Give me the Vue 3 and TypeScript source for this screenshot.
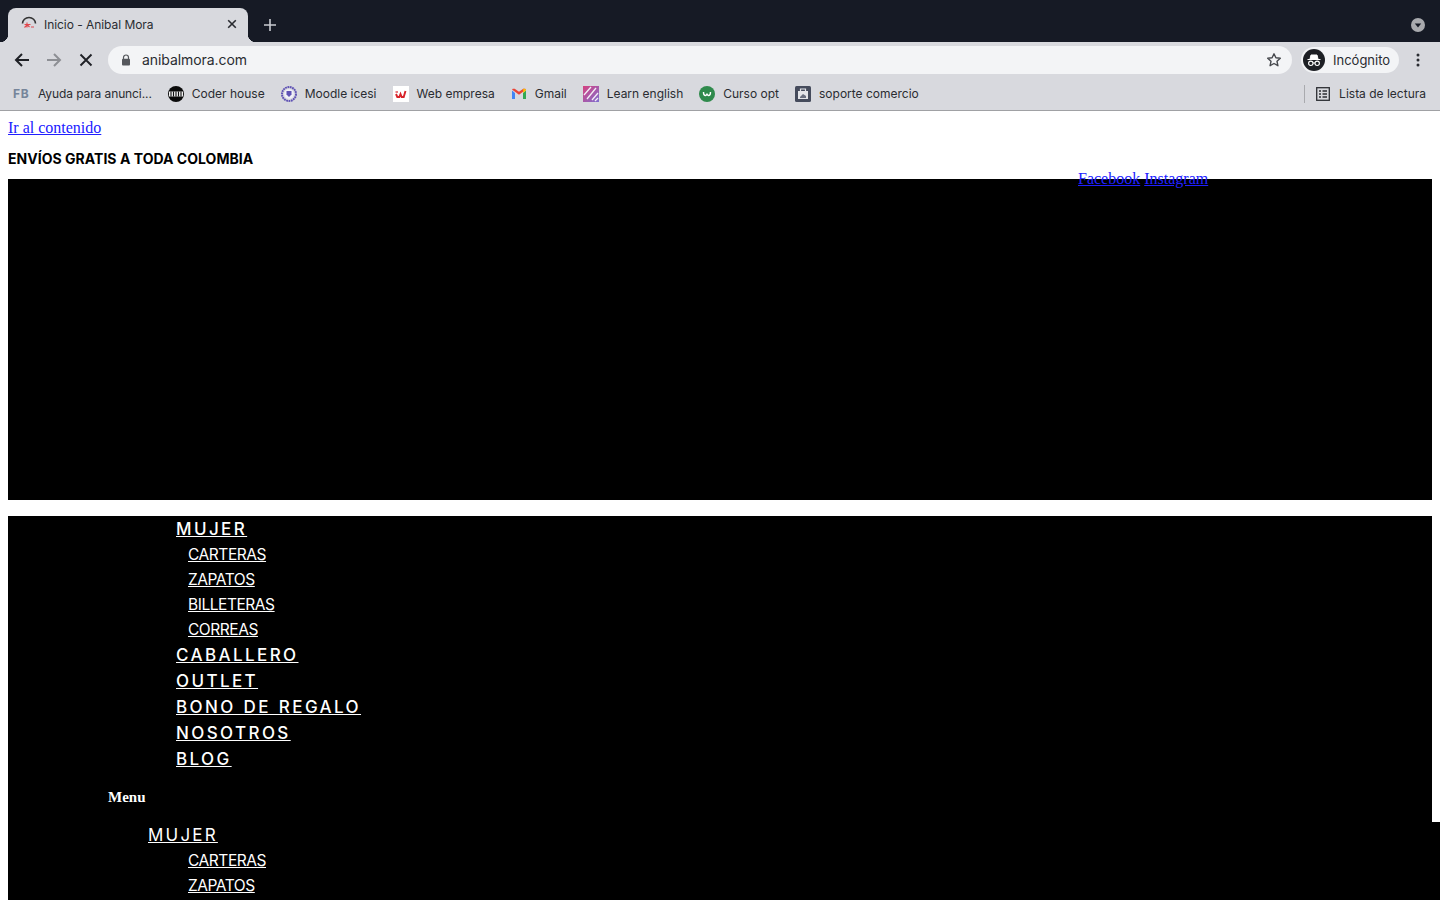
<script setup lang="ts">
interface Bookmark {
  label: string
  icon: string
}

interface NavItem {
  label: string
  children?: string[]
}

const bookmarks: Bookmark[] = [
  { label: 'Ayuda para anunci...', icon: 'fb' },
  { label: 'Coder house', icon: 'coder' },
  { label: 'Moodle icesi', icon: 'moodle' },
  { label: 'Web empresa', icon: 'web' },
  { label: 'Gmail', icon: 'gmail' },
  { label: 'Learn english', icon: 'learn' },
  { label: 'Curso opt', icon: 'curso' },
  { label: 'soporte comercio', icon: 'soporte' },
]

const subItems = ['CARTERAS', 'ZAPATOS', 'BILLETERAS', 'CORREAS']

const mainNav: NavItem[] = [
  { label: 'MUJER', children: subItems },
  { label: 'CABALLERO' },
  { label: 'OUTLET' },
  { label: 'BONO DE REGALO' },
  { label: 'NOSOTROS' },
  { label: 'BLOG' },
]

// only the first two fit above the fold
const mobileSubs = subItems.slice(0, 2)
</script>

<template>
  <div class="screen">
    <header class="browser">
      <div class="tabstrip">
        <div class="tab">
          <svg class="tab-icon" viewBox="0 0 16 16" width="16" height="16">
            <path d="M1.5 7.5A6.5 6 0 0 1 14.5 7.5" fill="none" stroke="#333" stroke-width="1.6" />
            <path d="M3.5 8.5h6M6 6.5v5M6 9l-2.500 2.500M6.500 9l2 2M10 11h3" fill="none" stroke="#e0474c" stroke-width="1.1" />
          </svg>
          <span class="tab-title">Inicio - Anibal Mora</span>
          <svg class="tab-close" viewBox="0 0 10 10" width="10" height="10">
            <path d="M1.2 1.2l7.6 7.6M8.8 1.2l-7.6 7.6" stroke="#2a2c31" stroke-width="1.6" />
          </svg>
        </div>
        <svg class="new-tab" viewBox="0 0 12 12" width="12" height="12">
          <path d="M6 0v12M0 6h12" stroke="#c9cbd1" stroke-width="1.6" />
        </svg>
        <svg class="tab-search" viewBox="0 0 14 14" width="14" height="14">
          <circle cx="7" cy="7" r="7" fill="#a9aaae" />
          <path d="M3.8 5.5h6.4L7 9.6z" fill="#161a25" />
        </svg>
      </div>

      <div class="toolbar">
        <svg class="nav-icon" viewBox="0 0 16 16" width="16" height="16">
          <path d="M15 8H2M8 2L2 8l6 6" fill="none" stroke="#1f2126" stroke-width="2" />
        </svg>
        <svg class="nav-icon" viewBox="0 0 16 16" width="16" height="16">
          <path d="M1 8h13M8 2l6 6-6 6" fill="none" stroke="#8d8f94" stroke-width="2" />
        </svg>
        <svg class="nav-icon" viewBox="0 0 16 16" width="16" height="16">
          <path d="M2.500 2.500l11 11M13.500 2.500l-11 11" fill="none" stroke="#1f2126" stroke-width="1.900" />
        </svg>
        <div class="omnibox">
          <svg class="lock" viewBox="0 0 10 12" width="10" height="12">
            <path d="M2.500 5V3.500a2.500 2.500 0 0 1 5 0V5" fill="none" stroke="#55575c" stroke-width="1.2" />
            <rect x="1" y="4.800" width="8" height="6.700" rx="1" fill="#55575c" />
          </svg>
          <span class="url">anibalmora.com</span>
          <svg class="star" viewBox="0 0 16 16" width="16" height="16">
            <path d="M8 1.800l1.900 4 4.400.5-3.300 3 .9 4.400L8 11.500l-3.900 2.200.9-4.400-3.300-3 4.400-.5z" fill="none" stroke="#46484d" stroke-width="1.400" stroke-linejoin="round" />
          </svg>
        </div>
        <div class="incognito">
          <svg viewBox="0 0 22 22" width="22" height="22">
            <circle cx="11" cy="11" r="11" fill="#1d1f24" />
            <path d="M4.500 10.500h13M7 10l1-4h6l1 4z" fill="#fff" stroke="#fff" stroke-width="1" />
            <circle cx="7.800" cy="14.300" r="2.200" fill="none" stroke="#fff" stroke-width="1.100" />
            <circle cx="14.200" cy="14.300" r="2.200" fill="none" stroke="#fff" stroke-width="1.100" />
            <path d="M10 14h2" stroke="#fff" stroke-width="1" />
          </svg>
          <span>Incógnito</span>
        </div>
        <svg class="dots" viewBox="0 0 4 14" width="4" height="14">
          <circle cx="2" cy="2" r="1.500" fill="#2a2c31" />
          <circle cx="2" cy="7" r="1.500" fill="#2a2c31" />
          <circle cx="2" cy="12" r="1.500" fill="#2a2c31" />
        </svg>
      </div>

      <div class="bookmarks">
        <div v-for="b in bookmarks" :key="b.label" class="bookmark">
          <span v-if="b.icon === 'fb'" class="fb-mark">FB</span>
          <svg v-else-if="b.icon === 'coder'" viewBox="0 0 16 16" width="16" height="16">
            <circle cx="8" cy="8" r="8" fill="#0b0b0b" />
            <rect x="1" y="5.500" width="14" height="5" fill="#f0f0f0" />
            <path d="M3 5.500v5M5.500 5.500v5M8 5.500v5M10.500 5.500v5M13 5.500v5" stroke="#111" stroke-width="1.100" />
          </svg>
          <svg v-else-if="b.icon === 'moodle'" viewBox="0 0 16 16" width="16" height="16">
            <circle cx="8" cy="8" r="7" fill="none" stroke="#5f52b4" stroke-width="2" stroke-dasharray="1.800 .6" />
            <circle cx="8" cy="8" r="4.800" fill="#f1f0f8" />
            <path d="M5.500 5h5v3.500L8 11 5.500 8.500z" fill="#5f52b4" />
          </svg>
          <svg v-else-if="b.icon === 'web'" viewBox="0 0 16 16" width="16" height="16">
            <rect width="16" height="16" fill="#fff" />
            <path d="M3 8l1.300 3h2l1.200-3 1.200 3h2l1.800-6" fill="none" stroke="#d8232a" stroke-width="1.900" />
            <path d="M2.500 6h2.500" stroke="#d8232a" stroke-width="1.200" />
          </svg>
          <svg v-else-if="b.icon === 'gmail'" viewBox="0 0 16 16" width="16" height="16">
            <path d="M1 4.500v8.500h3V7z" fill="#4285f4" />
            <path d="M12 7v6h3V4.500z" fill="#34a853" />
            <path d="M1 3.500L8 8.800l7-5.300-.8-.8H12.300L8 5.800 3.700 2.700H1.800z" fill="#ea4335" />
            <path d="M13.500 2.700h-1.300L12 7l3-2.500V3.500z" fill="#fbbc04" />
          </svg>
          <svg v-else-if="b.icon === 'learn'" viewBox="0 0 16 16" width="16" height="16">
            <defs>
              <linearGradient id="learnFill" x1="0" y1="0" x2="1" y2="1">
                <stop offset="0" stop-color="#d6417f" />
                <stop offset="1" stop-color="#7f6fd0" />
              </linearGradient>
            </defs>
            <rect width="16" height="16" fill="url(#learnFill)" />
            <path d="M1 9l7-8M4 13l9-11M9 14l6-7M12 15l3-3" stroke="#f3eef6" stroke-width="1.300" />
          </svg>
          <svg v-else-if="b.icon === 'curso'" viewBox="0 0 16 16" width="16" height="16">
            <circle cx="8" cy="8" r="8" fill="#2f8a4c" />
            <path d="M4.500 6c0 4.500 3.200 4.300 3.500 1.500.3 2.800 3.500 3 3.500-1.500" fill="none" stroke="#fff" stroke-width="1.400" />
          </svg>
          <svg v-else viewBox="0 0 16 16" width="16" height="16">
            <rect width="16" height="16" rx="1.500" fill="#454b5c" />
            <path d="M3 5h10v8H3z" fill="#e4e5e9" />
            <path d="M5.500 5V3h5v2" fill="none" stroke="#e4e5e9" stroke-width="1.200" />
            <path d="M5 11l3-3 3 2v2H5z" fill="#6b7080" />
          </svg>
          <span class="bookmark-label">{{ b.label }}</span>
        </div>
        <div class="reading-list">
          <svg viewBox="0 0 14 14" width="14" height="14">
            <rect x=".7" y=".7" width="12.600" height="12.600" fill="none" stroke="#2d2f34" stroke-width="1.300" />
            <path d="M3 4h2M3 7h2M3 10h2M6.500 4H11M6.500 7H11M6.500 10H11" stroke="#2d2f34" stroke-width="1.300" />
          </svg>
          <span class="bookmark-label">Lista de lectura</span>
        </div>
      </div>
    </header>

    <main class="page">
      <a class="skip" href="#">Ir al contenido</a>
      <p class="promo">ENVÍOS GRATIS A TODA COLOMBIA</p>
      <div class="hero">
        <div class="social"><a href="#">Facebook</a> <a href="#">Instagram</a></div>
      </div>
      <nav class="menu-block">
        <ul class="main-nav">
          <li v-for="item in mainNav" :key="item.label">
            <a class="top-link" href="#">{{ item.label }}</a>
            <ul v-if="item.children" class="sub-nav">
              <li v-for="child in item.children" :key="child"><a href="#">{{ child }}</a></li>
            </ul>
          </li>
        </ul>
        <div class="menu-title">Menu</div>
      </nav>
      <nav class="mobile-nav">
        <a class="top-link thin" href="#">MUJER</a>
        <ul class="sub-nav mobile">
          <li v-for="child in mobileSubs" :key="child"><a href="#">{{ child }}</a></li>
        </ul>
      </nav>
    </main>
  </div>
</template>

<style scoped>
.screen {
  width: 1440px;
  height: 900px;
  overflow: hidden;
  background: #fff;
}

.browser {
  font-family: Inter, "Liberation Sans", sans-serif;
  color: #2a2c31;
}

.tabstrip {
  display: flex;
  align-items: flex-end;
  height: 42px;
  padding-left: 8px;
  background: #161a25;
}

.tab {
  position: relative;
  display: flex;
  align-items: center;
  width: 240px;
  height: 34px;
  box-sizing: border-box;
  padding: 0 11px 2px 13px;
  border-radius: 8px 8px 0 0;
  background: #d8d9de;
}

.tab::before,
.tab::after {
  content: "";
  position: absolute;
  bottom: 0;
  width: 8px;
  height: 8px;
}

.tab::before {
  left: -8px;
  background: radial-gradient(circle at 0 0, transparent 8px, #d8d9de 8.500px);
}

.tab::after {
  right: -8px;
  background: radial-gradient(circle at 100% 0, transparent 8px, #d8d9de 8.500px);
}

.tab-title {
  flex: 1;
  margin-left: 7px;
  font-size: 12px;
  letter-spacing: -.05px;
}

.new-tab {
  margin: 0 0 11px 16px;
}

.tab-search {
  margin: 0 15px 10px auto;
}

.toolbar {
  display: flex;
  align-items: center;
  height: 36px;
  padding-left: 14px;
  background: #d8d9de;
}

.nav-icon {
  margin-right: 16px;
}

.omnibox {
  display: flex;
  align-items: center;
  width: 1184px;
  height: 28px;
  box-sizing: border-box;
  margin-left: -2px;
  padding: 0 10px 0 13px;
  border-radius: 14px;
  background: #f3f4f6;
}

.url {
  flex: 1;
  margin: -2px 0 0 11px;
  font-size: 14px;
  letter-spacing: -.07px;
}

.incognito {
  display: flex;
  align-items: center;
  gap: 8px;
  width: 98px;
  height: 26px;
  box-sizing: border-box;
  margin-left: 9px;
  padding-left: 2px;
  border-radius: 13px;
  background: #f3f4f6;
  font-size: 13px;
}

.dots {
  margin-left: 17px;
}

.bookmarks {
  display: flex;
  align-items: center;
  gap: 16px;
  height: 33px;
  box-sizing: border-box;
  padding: 0 0 1px 13px;
  border-bottom: 1px solid #a0a1a4;
  background: #d8d9de;
}

.bookmark {
  display: flex;
  align-items: center;
  gap: 8px;
}

.bookmark-label {
  font-size: 12px;
  white-space: nowrap;
}

.bookmark:first-child .bookmark-label {
  letter-spacing: -.1px;
}

.fb-mark {
  width: 17px;
  color: #76859a;
  font-size: 12px;
  font-weight: 700;
  letter-spacing: .6px;
}

.reading-list {
  display: flex;
  align-items: center;
  gap: 9px;
  height: 18px;
  margin-left: auto;
  padding: 0 14px 0 11px;
  border-left: 1px solid #a9aaae;
}

.page {
  padding: 8px 0 0 8px;
  font-family: "Liberation Serif", serif;
  font-size: 16px;
}

.skip {
  display: block;
  color: #2020ff;
  line-height: 18px;
}

.promo {
  margin: 13px 0 0;
  color: #000;
  font-family: Inter, sans-serif;
  font-size: 14px;
  font-weight: 700;
  line-height: 17px;
  letter-spacing: .03px;
}

.hero {
  position: relative;
  width: 1424px;
  height: 321px;
  margin: 12px 0 16px;
  background: #000;
}

.social {
  position: absolute;
  top: -9px;
  left: 1070px;
  line-height: 18px;
  white-space: nowrap;
}

.social a {
  color: #2020ff;
}

.menu-block {
  width: 1424px;
  padding-bottom: 16px;
  background: #000;
  color: #fff;
}

.main-nav,
.sub-nav {
  margin: 0;
  padding: 0;
  list-style: none;
}

.main-nav {
  padding-left: 168px;
}

.menu-block a,
.mobile-nav a {
  color: #fff;
}

.top-link {
  display: block;
  width: fit-content;
  font-family: Inter, sans-serif;
  font-size: 17px;
  font-weight: 500;
  line-height: 26px;
  letter-spacing: 2.4px;
  word-spacing: 1px;
}

.top-link.thin {
  font-weight: 400;
  letter-spacing: 2.2px;
}

.sub-nav {
  padding-left: 12px;
}

.sub-nav li {
  height: 25px;
  line-height: 25px;
}

.sub-nav a {
  font-family: Inter, sans-serif;
  font-size: 15.500px;
  letter-spacing: -.45px;
}

.menu-title {
  margin: 16px 0 0 100px;
  font-size: 15px;
  font-weight: 700;
  line-height: 18px;
}

.mobile-nav {
  padding: 0 0 40px 140px;
  background: #000;
  color: #fff;
}

.sub-nav.mobile {
  padding-left: 40px;
}
</style>
